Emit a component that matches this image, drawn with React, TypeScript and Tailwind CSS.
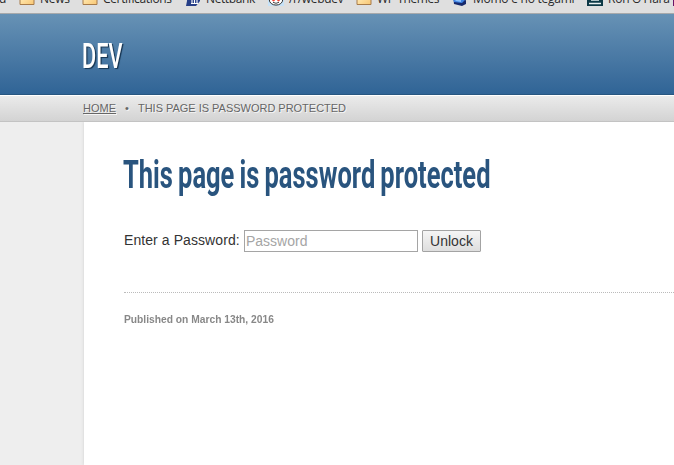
import type { ReactNode } from "react";

const Folder = () => (
  <svg width="16" height="16" viewBox="0 0 16 16" className="shrink-0">
    <defs>
      <linearGradient id="folder" x1="0" y1="0" x2="1" y2="1">
        <stop offset="0.3" stopColor="#ffe7ae" />
        <stop offset="1" stopColor="#f8c673" />
      </linearGradient>
    </defs>
    <path d="M1 2h6l1 2h7v10.5H1z" fill="url(#folder)" stroke="#a77b4a" />
  </svg>
);

const Bank = () => (
  <svg width="16" height="16" viewBox="0 0 16 16" className="shrink-0">
    <path d="M3 0h12v11l-4 5H1l1-5z" fill="#263e87" />
    <path d="M7 9v4M9.5 9v4M12 9v4M6 13.5h7" stroke="#fff" strokeWidth="1.1" />
  </svg>
);

const Reddit = () => (
  <svg width="16" height="16" viewBox="0 0 16 16" className="shrink-0">
    <path d="M0 0h16v16H0z" fill="#c6e2f8" />
    <ellipse cx="8" cy="9.8" rx="6.7" ry="5.3" fill="#fff" stroke="#333" />
    <circle cx="5.5" cy="10" r="1.4" fill="#f04436" />
    <circle cx="10.5" cy="10" r="1.4" fill="#f04436" />
    <path d="M5 12.3q3 2 6 0" fill="none" stroke="#444" />
  </svg>
);

const Letters = () => (
  <svg width="16" height="16" viewBox="0 0 16 16" className="shrink-0">
    <path d="M1 4l10-2 3 9v3l-4 2-8-2z" fill="#16296c" />
    <path d="M1 9l9-1 3 2-3 3-8-1z" fill="#3f83e4" />
    <path d="M3 10l6-1v3l-5-1z" fill="#8ec4ff" />
  </svg>
);

const Stack = () => (
  <svg width="16" height="16" viewBox="0 0 16 16" className="shrink-0">
    <path d="M0 0h16v16H0z" fill="#0d3946" />
    <path d="M4 10h8M2 13.5h12" stroke="#e9f1f1" strokeWidth="1.3" />
  </svg>
);

const Bookmark = ({ icon, label, className }: { icon: ReactNode; label: string; className: string }) => (
  <div className={`flex h-4 shrink-0 items-start gap-[5px] ${className}`}>
    {icon}
    <span className="pt-px leading-4">{label}</span>
  </div>
);

export default function App() {
  return (
    <div className="flex h-[465px] w-[674px] flex-col overflow-hidden bg-[#eeeeee] font-['Liberation_Sans',Arial,sans-serif]">
      <div className="h-[14px] shrink-0 overflow-hidden border-b border-[#a7a9ab] bg-[#dfdfdf]">
        <div className="-mt-[10px] flex w-[760px] whitespace-nowrap font-['Open_Sans',sans-serif] text-[12px] text-[#292929]">
          <span className="-ml-px w-5 shrink-0 pt-px leading-4">d</span>
          <Bookmark icon={<Folder />} label="News" className="w-[63px] tracking-[-0.3px]" />
          <Bookmark icon={<Folder />} label="Certifications" className="w-[103px] tracking-[-0.35px]" />
          <Bookmark icon={<Bank />} label="Nettbank" className="w-[83px] tracking-[-0.4px]" />
          <Bookmark icon={<Reddit />} label="/r/webdev" className="w-[88px] tracking-[-0.3px]" />
          <Bookmark icon={<Folder />} label="WP Themes" className="w-[96px] tracking-[-0.4px]" />
          <Bookmark icon={<Letters />} label="Momo e no tegami" className="w-[135px] tracking-[-0.25px]" />
          <Bookmark icon={<Stack />} label="Ron O'Hara" className="w-[86px] tracking-[-0.25px]" />
          <div className="h-4 w-4 shrink-0 bg-[#6b1466]" />
        </div>
      </div>
      <header className="h-[81px] shrink-0 border-b border-[#285680] bg-linear-to-b from-[#6792b5] to-[#306496] pl-[82px] pt-[23px]">
        <div className="w-max origin-left scale-x-[0.62] font-[Roboto,sans-serif] text-[35px] font-medium leading-[40px] text-white [text-shadow:2px_1px_1px_#173653]">
          DEV
        </div>
      </header>
      <nav className="flex h-[27px] shrink-0 items-center border-b border-t border-b-[#c3c3c3] border-t-white bg-linear-to-b from-[#ebebeb] to-[#d3d3d3] pl-[83px] text-[11px] text-[#666] [text-shadow:1px_1px_0_#f5f5f5]">
        <a className="underline">HOME</a>
        <span className="w-[22px] text-center">•</span>
        <span className="tracking-[-0.02px]">THIS PAGE IS PASSWORD PROTECTED</span>
      </nav>
      <main className="ml-[84px] flex-1 bg-white pl-10 shadow-[0_0_3px_#cfcfcf] [clip-path:inset(0_0_0_-4px)]">
        <h1 className="-ml-px w-max origin-left scale-x-[0.671] pt-[31px] font-[Roboto,sans-serif] text-[38px] font-bold leading-[44px] text-[#29547e] [word-spacing:-1.8px]">
          This page is password protected
        </h1>
        <form className="flex pt-[33px] text-[14px] text-[#333]">
          <label className="w-[120px] leading-[20px] tracking-[0.08px]">Enter a Password:</label>
          <input
            type="password"
            placeholder="Password"
            className="h-[22px] w-[174px] border border-[#a5a5a5] px-px text-[14px] placeholder:text-[#a5a5a5]"
          />
          <button
            type="button"
            className="ml-1 h-[22px] w-[59px] rounded-[1px] border border-[#a3a3a3] bg-linear-to-b from-[#f5f5f5] to-[#dedede] text-[14px] leading-[20px]"
          >
            Unlock
          </button>
        </form>
        <div className="mt-10 border-t border-dotted border-[#bbb]" />
        <p className="w-max origin-left scale-x-[0.932] pt-[19px] text-[11px] font-bold leading-[15px] text-[#888]">
          Published on March 13th, 2016
        </p>
      </main>
    </div>
  );
}
